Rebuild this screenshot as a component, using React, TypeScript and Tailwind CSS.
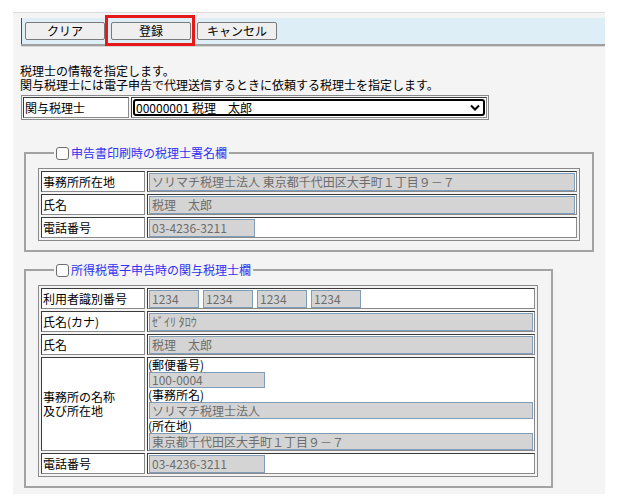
import React from "react";

const font = { fontFamily: "'Noto Sans CJK JP', 'Noto Sans', sans-serif" };

const cellCls =
  "bg-white border border-t-[#3a3a3a] border-l-[#3a3a3a] border-r-[#8a8a8a] border-b-[#8a8a8a]";

function Field({ value, w, h = 18 }: { value: string; w?: number; h?: number }) {
  return (
    <div
      className="bg-[#d4d4d4] border border-[#7f9db9] text-[#6d6d6d] text-[12px] pl-[2px] whitespace-nowrap overflow-hidden flex items-center"
      style={{ width: w ? `${w}px` : undefined, height: `${h}px` }}
    >
      {value}
    </div>
  );
}

function Label({ children }: { children: React.ReactNode }) {
  return (
    <div className={`${cellCls} flex items-center pl-[1px] text-[12px] leading-[14px] text-black`}>{children}</div>
  );
}

function Value({ children }: { children: React.ReactNode }) {
  return <div className={`${cellCls} p-[1px]`}>{children}</div>;
}

function Legend({ text }: { text: string }) {
  return (
    <legend className="ml-[16px] px-[2px]">
      <div className="flex items-center gap-[2px] h-[14px]">
        <div className="w-[13px] h-[13px] rounded-[3px] border border-[#6e6e6e] bg-white" />
        <span className="text-[12px] leading-[14px] text-[#3030f0]">{text}</span>
      </div>
    </legend>
  );
}

function Btn({ children }: { children: React.ReactNode }) {
  return (
    <div className="w-[80px] h-[18px] bg-[#efefef] border border-[#7a7a7a] rounded-[2px] flex items-center justify-center text-[12px] text-black">
      {children}
    </div>
  );
}

export default function App() {
  return (
    <div className="w-[619px] h-[502px] bg-white relative pt-[12px] pl-[13px]" style={font}>
      <div className="w-[592px] h-[482px] bg-[#f4f4f4] border-t border-[#dcdcdc]">
        {/* toolbar */}
        <div className="ml-[8px] mt-[5px] h-[26px] bg-[#ddeef6] border-l border-[#2d5e46] flex items-start gap-[6px] pl-[3px] pt-[4px]">
          <Btn>クリア</Btn>
          <Btn>登録</Btn>
          <Btn>キャンセル</Btn>
        </div>
        <div className="ml-[8px] h-[2px] bg-[#a0a0a0]" />
        <div className="ml-[8px] h-[1px] bg-[#d6d6d6]" />

        {/* description */}
        <div className="ml-[7px] mt-[17px] text-[12px] leading-[14px] text-black">
          <div>税理士の情報を指定します。</div>
          <div>関与税理士には電子申告で代理送信するときに依頼する税理士を指定します。</div>
        </div>

        {/* 関与税理士 */}
        <div className="ml-[8px] mt-[3px] w-[468px] border border-[#8a8a8a] p-[1px] grid grid-cols-[106px_1fr] gap-[2px]">
          <div className={`${cellCls} h-[21px] flex items-center pl-[1px] text-[12px]`}>関与税理士</div>
          <div className={`${cellCls} h-[21px] p-[1px]`}>
            <div className="h-[17px] border-2 border-black rounded-[3px] bg-white flex items-center justify-between pl-[1px] pr-[3px] text-[12px] text-black">
              <span>00000001 税理　太郎</span>
              <svg width="10" height="7" viewBox="0 0 10 7">
                <path d="M1 1.5 L5 5.5 L9 1.5" fill="none" stroke="#000" strokeWidth="2" />
              </svg>
            </div>
          </div>
        </div>

        {/* fieldset 1 */}
        <fieldset className="ml-[11px] mt-[26px] w-[570px] border-2 border-[#a3a3a3] px-[12px] pt-[8px] pb-[9px]">
          <Legend text="申告書印刷時の税理士署名欄" />
          <div className="w-[542px] border border-[#8a8a8a] p-[2px] grid grid-cols-[104px_1fr] auto-rows-[21px] gap-[2px]">
            <Label>事務所所在地</Label>
            <Value>
              <Field value="ソリマチ税理士法人 東京都千代田区大手町１丁目９－７" />
            </Value>
            <Label>氏名</Label>
            <Value>
              <Field value="税理　太郎" />
            </Value>
            <Label>電話番号</Label>
            <Value>
              <Field value="03-4236-3211" w={106} />
            </Value>
          </div>
        </fieldset>

        {/* fieldset 2 */}
        <fieldset className="ml-[11px] mt-[11px] w-[529px] border-2 border-[#a3a3a3] px-[12px] pt-[8px] pb-[9px]">
          <Legend text="所得税電子申告時の関与税理士欄" />
          <div className="w-[500px] border border-[#8a8a8a] p-[2px] grid grid-cols-[104px_1fr] gap-[2px]">
            <Label>利用者識別番号</Label>
            <div className={`${cellCls} p-[1px] h-[21px] flex gap-[4px]`}>
              <Field value="1234" w={50} />
              <Field value="1234" w={50} />
              <Field value="1234" w={50} />
              <Field value="1234" w={50} />
            </div>
            <Label>氏名(カナ)</Label>
            <div className={`${cellCls} p-[1px] h-[21px]`}>
              <Field value="ｾﾞｲﾘ ﾀﾛｳ" />
            </div>
            <Label>氏名</Label>
            <div className={`${cellCls} p-[1px] h-[21px]`}>
              <Field value="税理　太郎" />
            </div>
            <Label>
              <div>
                <div>事務所の名称</div>
                <div>及び所在地</div>
              </div>
            </Label>
            <div className={`${cellCls} pr-[1px] h-[94px] text-[12px] text-black`}>
              <div className="leading-[14px]">(郵便番号)</div>
              <div className="pl-[1px]">
                <Field value="100-0004" w={116} h={16} />
              </div>
              <div className="leading-[14px]">(事務所名)</div>
              <div className="pl-[1px]">
                <Field value="ソリマチ税理士法人" h={17} />
              </div>
              <div className="leading-[14px]">(所在地)</div>
              <div className="pl-[1px]">
                <Field value="東京都千代田区大手町１丁目９－７" h={17} />
              </div>
            </div>
            <Label>電話番号</Label>
            <div className={`${cellCls} p-[1px] h-[21px]`}>
              <Field value="03-4236-3211" w={116} />
            </div>
          </div>
        </fieldset>
      </div>

      {/* highlight overlay */}
      <div className="absolute left-[105px] top-[15px] w-[90px] h-[31px] border-[3px] border-[#e51919]" />
    </div>
  );
}
